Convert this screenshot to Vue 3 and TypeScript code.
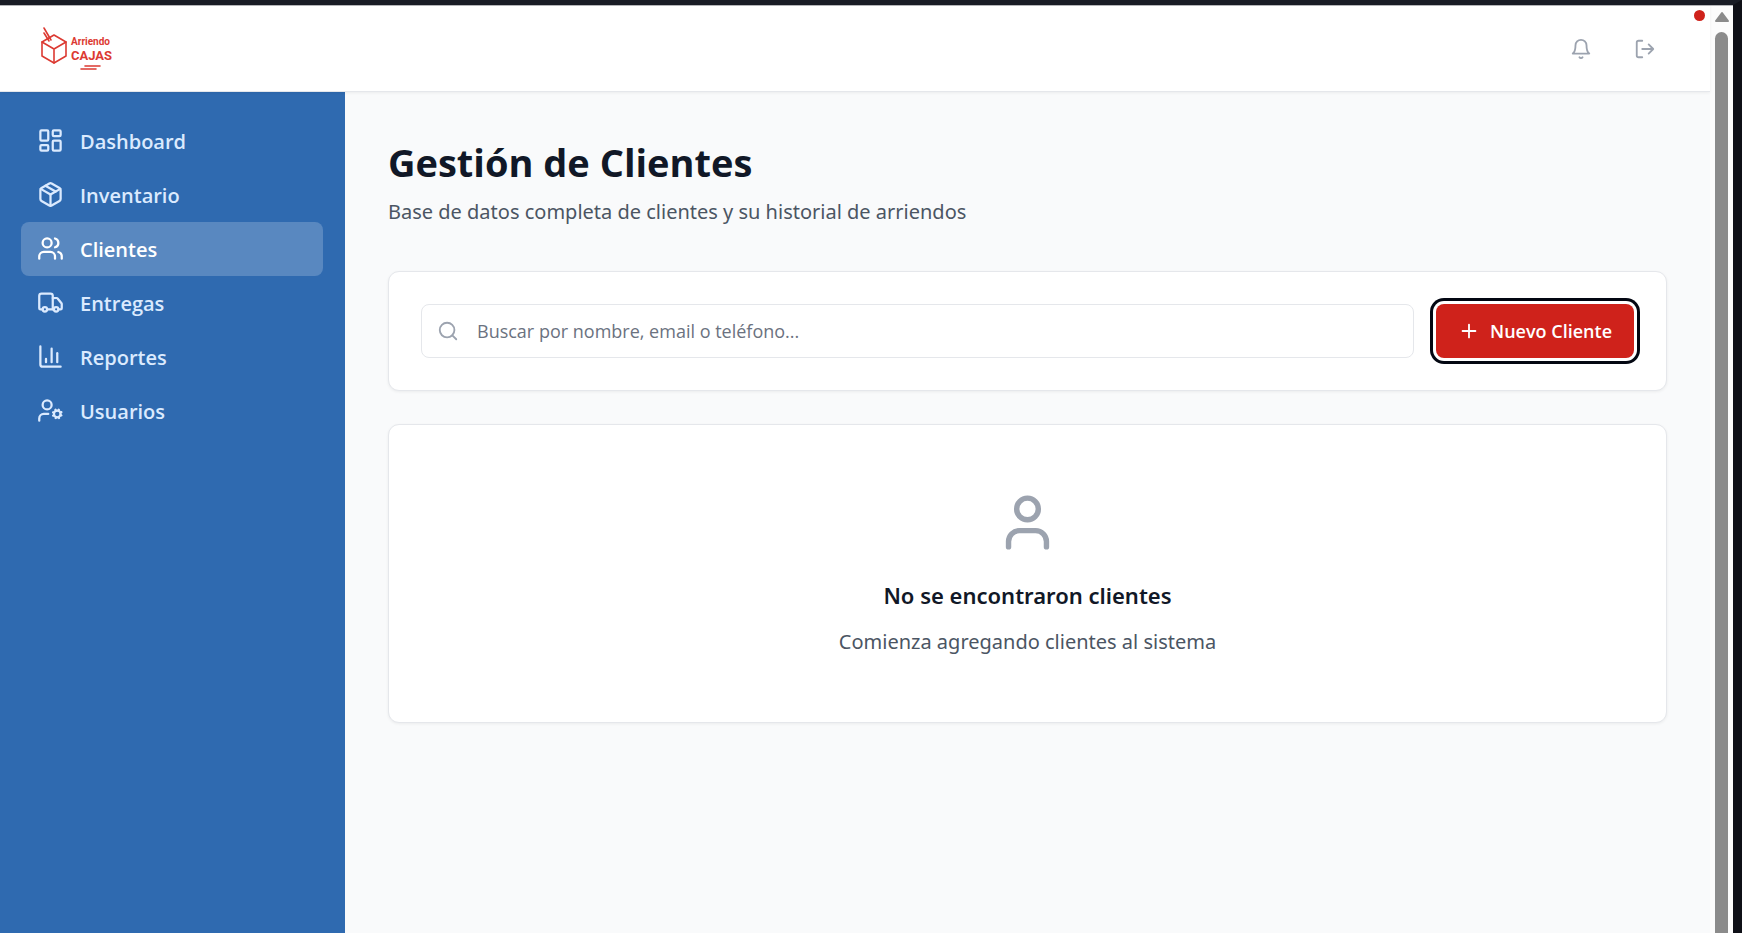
<script setup lang="ts">
import { ref } from 'vue'

interface NavItem {
  label: string
  paths: string[]
}

const navItems: NavItem[] = [
  {
    label: 'Dashboard',
    paths: [
      'M4 3h5a1 1 0 0 1 1 1v7a1 1 0 0 1-1 1H4a1 1 0 0 1-1-1V4a1 1 0 0 1 1-1z',
      'M15 3h5a1 1 0 0 1 1 1v3a1 1 0 0 1-1 1h-5a1 1 0 0 1-1-1V4a1 1 0 0 1 1-1z',
      'M15 12h5a1 1 0 0 1 1 1v7a1 1 0 0 1-1 1h-5a1 1 0 0 1-1-1v-7a1 1 0 0 1 1-1z',
      'M4 16h5a1 1 0 0 1 1 1v3a1 1 0 0 1-1 1H4a1 1 0 0 1-1-1v-3a1 1 0 0 1 1-1z',
    ],
  },
  {
    label: 'Inventario',
    paths: [
      'M11 21.73a2 2 0 0 0 2 0l7-4A2 2 0 0 0 21 16V8a2 2 0 0 0-1-1.73l-7-4a2 2 0 0 0-2 0l-7 4A2 2 0 0 0 3 8v8a2 2 0 0 0 1 1.73z',
      'M12 22V12',
      'M3.3 7 12 12l8.7-5',
      'm7.5 4.27 9 5.15',
    ],
  },
  {
    label: 'Clientes',
    paths: [
      'M16 21v-2a4 4 0 0 0-4-4H6a4 4 0 0 0-4 4v2',
      'M5 7a4 4 0 1 0 8 0a4 4 0 1 0-8 0',
      'M22 21v-2a4 4 0 0 0-3-3.87',
      'M16 3.13a4 4 0 0 1 0 7.75',
    ],
  },
  {
    label: 'Entregas',
    paths: [
      'M14 18V6a2 2 0 0 0-2-2H4a2 2 0 0 0-2 2v11a1 1 0 0 0 1 1h2',
      'M15 18H9',
      'M19 18h2a1 1 0 0 0 1-1v-3.65a1 1 0 0 0-.22-.62l-3.48-4.35A1 1 0 0 0 17.52 8H14',
      'M15 18a2 2 0 1 0 4 0a2 2 0 1 0-4 0',
      'M5 18a2 2 0 1 0 4 0a2 2 0 1 0-4 0',
    ],
  },
  {
    label: 'Reportes',
    paths: ['M3 3v16a2 2 0 0 0 2 2h16', 'M18 17V9', 'M13 17V5', 'M8 17v-3'],
  },
  {
    label: 'Usuarios',
    paths: [
      'M5 7a4 4 0 1 0 8 0a4 4 0 1 0-8 0',
      'M10 15H6a4 4 0 0 0-4 4v2',
      'M15 15a3 3 0 1 0 6 0a3 3 0 1 0-6 0',
      'm21.7 16.4-.9-.3',
      'm15.2 13.9-.9-.3',
      'm16.6 18.7.3-.9',
      'm19.1 12.2.3-.9',
      'm19.6 18.7-.4-1',
      'm16.8 12.3-.4-1',
      'm14.3 16.6 1-.4',
      'm20.7 13.8 1-.4',
    ],
  },
]

const current = ref('Clientes')
const query = ref('')
</script>

<template>
  <div class="window">
    <div class="page">
      <header class="header">
        <svg class="logo" viewBox="0 0 72 46" role="img" aria-label="Arriendo Cajas">
          <g class="logo-mark">
            <path d="M13 9 25 16v14L13 37 1 30V16z" />
            <path d="M1 16l12 7 12-7M13 23v14" />
            <path d="M3 2l7 12M3 7l5 8" />
            <path d="M44 40h15M40 43h15" />
          </g>
          <text class="logo-top" x="30" y="19">Arriendo</text>
          <text class="logo-bottom" x="30" y="34">CAJAS</text>
        </svg>
        <div class="actions">
          <button type="button" class="icon-button" aria-label="Notificaciones">
            <svg viewBox="0 0 24 24"><path d="M6 8a6 6 0 0 1 12 0c0 7 3 9 3 9H3s3-2 3-9" /><path d="M10.300 21a1.940 1.940 0 0 0 3.400 0" /></svg>
          </button>
          <button type="button" class="icon-button" aria-label="Cerrar sesión">
            <svg viewBox="0 0 24 24"><path d="M9 21H5a2 2 0 0 1-2-2V5a2 2 0 0 1 2-2h4" /><path d="m16 17 5-5-5-5M21 12H9" /></svg>
          </button>
        </div>
        <span class="alert-dot"></span>
      </header>

      <div class="body">
        <nav class="sidebar">
          <a
            v-for="item in navItems"
            :key="item.label"
            href="#"
            class="nav-link"
            :class="{ active: item.label === current }"
            @click.prevent="current = item.label"
          >
            <svg viewBox="0 0 24 24"><path v-for="d in item.paths" :key="d" :d="d" /></svg>
            <span>{{ item.label }}</span>
          </a>
        </nav>

        <main class="main">
          <h1>Gestión de Clientes</h1>
          <p class="subtitle">Base de datos completa de clientes y su historial de arriendos</p>

          <section class="card toolbar">
            <label class="search">
              <svg viewBox="0 0 24 24"><circle cx="11" cy="11" r="8" /><path d="m21 21-4.300-4.300" /></svg>
              <input v-model="query" type="text" aria-label="Buscar clientes" placeholder="Buscar por nombre, email o teléfono..." />
            </label>
            <button type="button" class="primary">
              <svg viewBox="0 0 24 24"><path d="M5 12h14M12 5v14" /></svg>
              <span>Nuevo Cliente</span>
            </button>
          </section>

          <section class="card empty">
            <svg viewBox="0 0 24 24"><path d="M19 21v-2a4 4 0 0 0-4-4H9a4 4 0 0 0-4 4v2" /><circle cx="12" cy="7" r="4" /></svg>
            <h2>No se encontraron clientes</h2>
            <p>Comienza agregando clientes al sistema</p>
          </section>
        </main>
      </div>
    </div>

    <div class="scrollbar" aria-hidden="true">
      <svg viewBox="0 0 16 12"><path d="M8 2 14 10H2z" /></svg>
      <div class="thumb"></div>
    </div>
  </div>
</template>

<style>
body {
  margin: 0;
}
</style>

<style scoped>
* {
  box-sizing: border-box;
}

.window {
  display: flex;
  min-height: 100vh;
  border-top: 5px solid #191c25;
  border-right: 9px solid #0f1017;
  background: #f9fafb;
  color: #111827;
  font-family: 'Noto Sans', 'Open Sans', sans-serif;
  font-size: 20px;
  line-height: 32px;
}

svg {
  flex: none;
  fill: none;
  stroke: currentColor;
  stroke-width: 2;
  stroke-linecap: round;
  stroke-linejoin: round;
}

.page {
  flex: 1;
  display: flex;
  flex-direction: column;
  min-width: 0;
}

.header {
  position: relative;
  display: flex;
  align-items: center;
  justify-content: space-between;
  height: 87px;
  padding: 0 54px 0 41px;
  background: #fff;
  border-top: 1px solid #b4b5b8;
  border-bottom: 1px solid #e5e7eb;
  box-shadow: 0 1px 3px rgba(0, 0, 0, 0.06);
}

.logo {
  width: 72px;
  height: 46px;
}

.logo-mark {
  stroke: #dc3a32;
  stroke-width: 1.6;
}

.logo text {
  fill: #dc3a32;
  stroke: none;
  font-family: Roboto, sans-serif;
  font-weight: 700;
}

.logo-top {
  font-size: 10px;
}

.logo-bottom {
  font-size: 13px;
}

.actions {
  display: flex;
  gap: 42px;
}

.icon-button {
  display: flex;
  padding: 0;
  border: 0;
  background: none;
  color: #9ca3af;
}

.icon-button svg {
  width: 22px;
  height: 22px;
}

.alert-dot {
  position: absolute;
  top: 4px;
  right: 5px;
  width: 11px;
  height: 11px;
  border-radius: 50%;
  background: #cf221b;
}

.body {
  flex: 1;
  display: flex;
}

.sidebar {
  flex: none;
  width: 345px;
  padding: 22px 22px 22px 21px;
  background: #2f6ab0;
}

.nav-link {
  display: flex;
  align-items: flex-start;
  gap: 16px;
  height: 54px;
  padding: 13px 16px;
  border-radius: 8px;
  color: #dbeafe;
  font-family: 'Open Sans', 'Noto Sans', sans-serif;
  font-weight: 600;
  line-height: 30px;
  text-decoration: none;
}

.nav-link svg {
  width: 27px;
  height: 27px;
}

.nav-link.active {
  background: #5988c0;
  color: #fff;
}

.main {
  flex: 1;
  min-width: 0;
  padding: 43px;
}

h1 {
  margin: 0;
  font-family: 'Open Sans', 'Noto Sans', sans-serif;
  font-size: 38px;
  line-height: 54px;
  font-weight: 700;
}

.subtitle {
  margin: 7px 0 43px;
  color: #4b5563;
}

.card {
  background: #fff;
  border: 1px solid #e5e7eb;
  border-radius: 11px;
  box-shadow: 0 1px 3px rgba(0, 0, 0, 0.06);
}

.toolbar {
  display: flex;
  gap: 22px;
  padding: 32px;
}

.search {
  flex: 1;
  display: flex;
  align-items: center;
  gap: 18px;
  height: 54px;
  padding: 0 15px;
  border: 1px solid #e5e7eb;
  border-radius: 8px;
  color: #9ca3af;
}

.search svg {
  width: 22px;
  height: 22px;
}

.search input {
  flex: 1;
  min-width: 0;
  padding: 0;
  border: 0;
  outline: 0;
  background: none;
  color: #111827;
  font-family: 'Open Sans', 'Noto Sans', sans-serif;
  font-size: 18px;
}

.search input::placeholder {
  color: #6b7280;
  opacity: 1;
}

.primary {
  display: flex;
  align-items: center;
  gap: 10px;
  height: 54px;
  padding: 0 22px;
  border: 0;
  border-radius: 8px;
  background: #cf221b;
  box-shadow: 0 0 0 3px #fff, 0 0 0 6px #030712;
  color: #fff;
  font-family: 'Open Sans', 'Noto Sans', sans-serif;
  font-size: 18px;
  font-weight: 600;
  white-space: nowrap;
}

.primary svg {
  width: 22px;
  height: 22px;
}

.empty {
  display: flex;
  flex-direction: column;
  align-items: center;
  margin-top: 33px;
  padding: 65px 32px 64px;
  text-align: center;
}

.empty svg {
  width: 65px;
  height: 65px;
  color: #9ca3af;
}

.empty h2 {
  margin: 23px 0 14px;
  font-size: 22px;
  line-height: 34px;
  font-weight: 600;
}

.empty p {
  margin: 0;
  color: #4b5563;
}

.scrollbar {
  flex: none;
  display: flex;
  flex-direction: column;
  align-items: center;
  width: 23px;
  padding-top: 5px;
  border-top: 1px solid #b4b5b8;
  background: #fcfcfc;
}

.scrollbar svg {
  width: 16px;
  height: 12px;
  color: #8b8b8b;
  fill: currentColor;
}

.thumb {
  flex: 1;
  width: 13px;
  margin-top: 9px;
  border-radius: 7px 7px 0 0;
  background: #8b8b8b;
}
</style>
